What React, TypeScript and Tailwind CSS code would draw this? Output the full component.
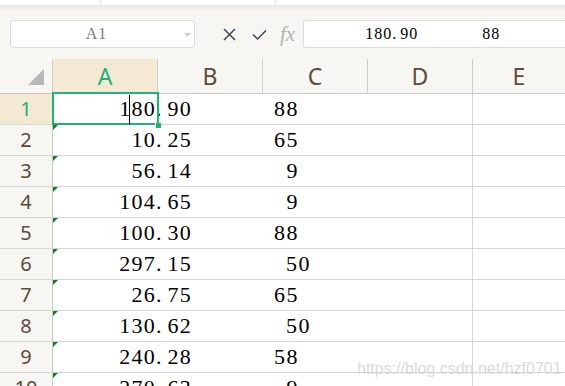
import React from 'react';

interface RowData {
  n: number;
  a: string;
  c: string;
  cEnd: number; // right edge of second value, measured from column A start
}

const rows: RowData[] = [
  { n: 1, a: '180.90', c: '88', cEnd: 244 },
  { n: 2, a: '10.25', c: '65', cEnd: 244 },
  { n: 3, a: '56.14', c: '9', cEnd: 244 },
  { n: 4, a: '104.65', c: '9', cEnd: 244 },
  { n: 5, a: '100.30', c: '88', cEnd: 244 },
  { n: 6, a: '297.15', c: '50', cEnd: 256 },
  { n: 7, a: '26.75', c: '65', cEnd: 244 },
  { n: 8, a: '130.62', c: '50', cEnd: 256 },
  { n: 9, a: '240.28', c: '58', cEnd: 244 },
  { n: 10, a: '270.63', c: '9', cEnd: 244 },
];

const columns = ['A', 'B', 'C', 'D', 'E'];

// SimSun-like number: wide gap after the period
const Num = ({ value }: { value: string }) => {
  const [int, dec] = value.split('.');
  return (
    <span className="tracking-[1.2px]">
      {int}.<span className="inline-block w-[5px]" />
      {dec}
    </span>
  );
};

export default function App() {
  return (
    <div className="relative w-[565px] h-[386px] overflow-hidden bg-white font-['Noto_Sans',sans-serif]">
      {/* Top strip */}
      <div className="relative h-[5px] bg-white">
        <div className="absolute left-[100px] top-0 h-[4px] w-px bg-[#e6e6e6]" />
        <div className="absolute left-[275px] top-0 h-[4px] w-px bg-[#e6e6e6]" />
      </div>

      {/* Formula toolbar */}
      <div className="h-[54px] bg-gradient-to-b from-[#e9e8e4] via-[#f7f6f2] via-[12%] to-[#f7f6f2] pt-[15px] flex items-start">
        <div className="ml-[10px] w-[185px] h-[28px] bg-white border border-[#dedcd8] rounded-[3px] relative flex items-center justify-center">
          <span className="mr-[12px] text-[16px] text-[#7a7a7a] font-['Liberation_Serif',serif] tracking-[1px]">A1</span>
          <svg className="absolute right-[3px] top-[12px]" width="7" height="4" viewBox="0 0 7 4">
            <path d="M0 0 L7 0 L3.5 4 Z" fill="#cfcfcf" />
          </svg>
        </div>
        <div className="ml-[28px] mt-[8px] flex items-center">
          <svg width="13" height="13" viewBox="0 0 13 13">
            <path d="M1 1 L12 12 M12 1 L1 12" stroke="#3d475a" strokeWidth="1.5" fill="none" />
          </svg>
          <svg className="ml-[16px]" width="15" height="12" viewBox="0 0 15 12">
            <path d="M1 5.5 L5.5 10 L14 1.5" stroke="#3d475a" strokeWidth="1.5" fill="none" />
          </svg>
        </div>
        <span className="ml-[13px] mt-[2px] text-[21px] italic text-[#b3b3b3] font-['Liberation_Serif',serif] leading-[24px]">
          fx
        </span>
        <div className="ml-[8px] flex-1 h-[28px] bg-white border border-r-0 border-[#dedcd8] rounded-l-[3px] flex items-center font-['Liberation_Serif',serif] text-[16px] text-black">
          <span className="ml-[61px] tracking-[1px]">
            180.<span className="inline-block w-[3px]" />90
          </span>
          <span className="ml-[64px] tracking-[1px]">88</span>
        </div>
      </div>

      {/* Column headers */}
      <div className="flex h-[35px] bg-[#f7f6f2] border-b border-[#c8c8c8]">
        <div className="w-[53px] border-r border-[#cfcfcf] relative">
          <svg className="absolute left-[28px] top-[10px]" width="16" height="16" viewBox="0 0 16 16">
            <path d="M16 0 L16 16 L0 16 Z" fill="#b7b7b7" />
          </svg>
        </div>
        {columns.map((col, i) => (
          <div
            key={col}
            className={`${i === 4 ? 'flex-1' : 'w-[105px] border-r border-[#cfcfcf]'} ${
              i === 0 ? 'bg-[#f4ead3] text-[#22b07a]' : 'text-[#5d4a3a]'
            } flex items-center justify-center text-[23px] leading-none`}
          >
            {col}
          </div>
        ))}
      </div>

      {/* Rows */}
      {rows.map((r) => (
        <div key={r.n} className="flex h-[31px] border-b border-[#d6d6d6]">
          <div
            className={`w-[53px] border-r border-[#c8c8c8] flex items-center justify-center text-[20px] ${
              r.n === 1 ? 'bg-[#f4ead3] text-[#22b07a]' : 'bg-[#f7f6f2] text-[#5d4a3a]'
            }`}
          >
            {r.n}
          </div>
          <div className="w-[315px] relative flex items-center font-['Liberation_Serif',serif] text-[22px] text-black leading-none">
            {r.n !== 1 && (
              <svg className="absolute left-0 top-0" width="5" height="5" viewBox="0 0 5 5">
                <path d="M0 0 L5 0 L0 5 Z" fill="#16801f" />
              </svg>
            )}
            <div className="w-[139px] text-right">
              <Num value={r.a} />
            </div>
            <div className="text-right" style={{ width: r.cEnd - 137 }}>
              <span className="tracking-[1.5px]">{r.c}</span>
            </div>
            {r.n === 1 && (
              <>
                <div className="absolute left-[-1px] top-[-2px] w-[107px] h-[33px] border-2 border-[#22b07a]" />
                <div className="absolute left-[102px] top-[29px] w-[6px] h-[5px] bg-[#22b07a] border-l border-white" />
                <div className="absolute left-[76px] top-[1px] w-px h-[29px] bg-black" />
              </>
            )}
          </div>
          <div className="w-[105px] border-r border-[#d6d6d6]" />
          <div className="flex-1" />
        </div>
      ))}

      {/* Watermark */}
      <div className="absolute left-[357px] top-[357px] text-[16px] font-['Liberation_Sans',sans-serif] text-[#d0d0d0]/80">
        https://blog.csdn.net/hzf0701
      </div>
    </div>
  );
}
